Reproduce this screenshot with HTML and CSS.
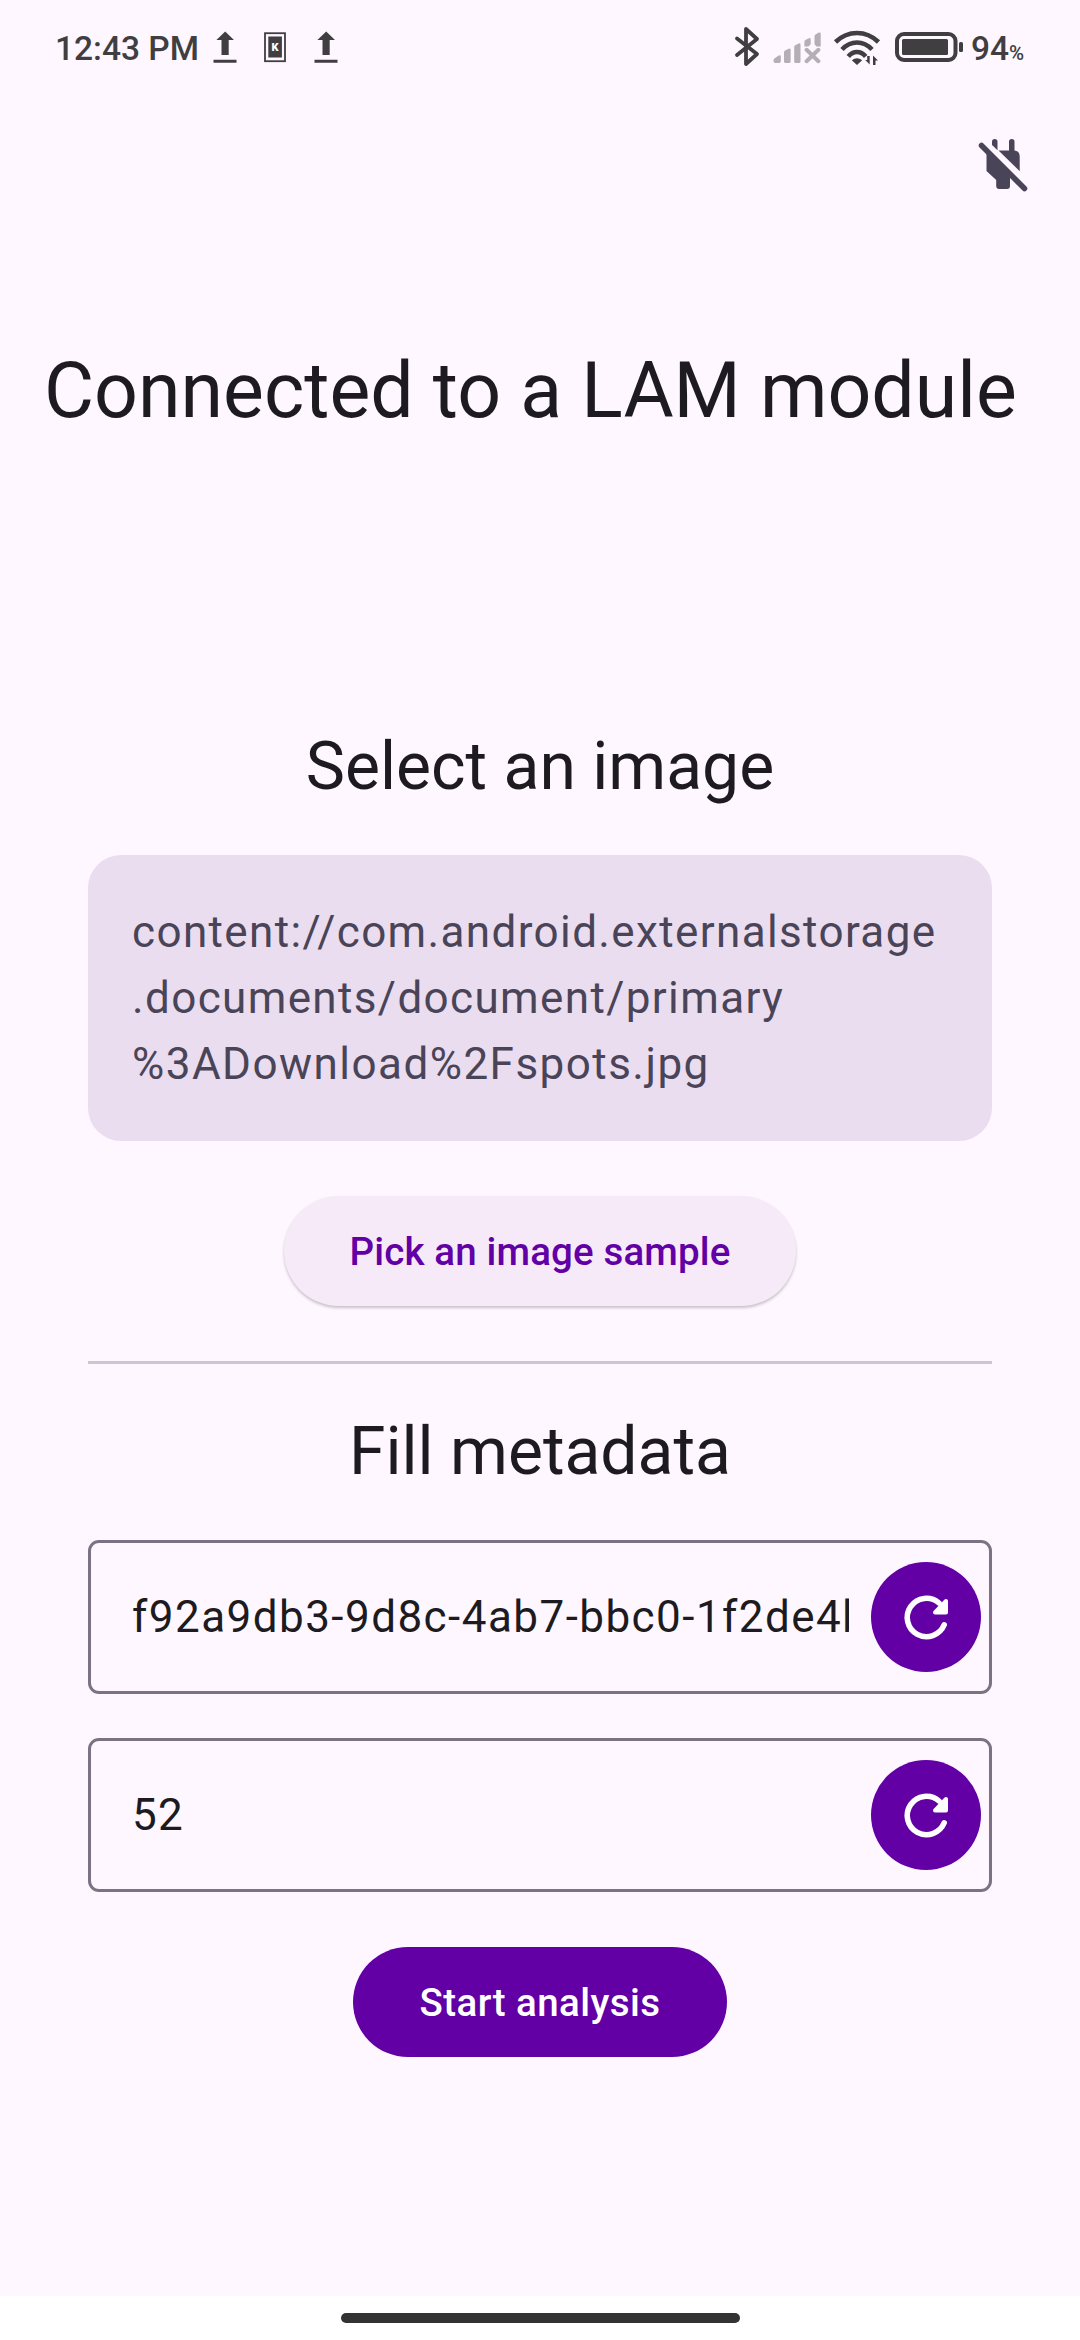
FILE: index.html
```html
<!DOCTYPE html>
<html lang="en">
<head>
<meta charset="utf-8">
<title>LAM module</title>
<link rel="stylesheet" href="styles.css">
</head>
<body>
<div class="screen">
  <header class="status-bar">
    <div class="status-left">
      <span class="clock">12:43 PM</span>
      <svg class="status-icon" width="24" height="40" viewBox="0 0 24 40"><path d="M12.2 4.5 21 13h-5.300v15H8.500V13H3.400zM.5 32.700h23v3H.5z" fill="#403e41"/></svg>
      <svg class="status-icon badge-icon" width="22" height="40" viewBox="0 0 22 40"><rect x="1" y="6.200" width="20" height="28" fill="none" stroke="#403e41" stroke-width="1.800"/><rect x="4.300" y="9.500" width="13.600" height="21" fill="#403e41"/><text x="7.400" y="24" class="badge-letter">K</text></svg>
      <svg class="status-icon" width="24" height="40" viewBox="0 0 24 40"><path d="M12.2 4.5 21 13h-5.300v15H8.500V13H3.400zM.5 32.700h23v3H.5z" fill="#403e41"/></svg>
    </div>
    <div class="status-right">
      <svg width="26" height="40" viewBox="734 27 26 40"><path d="M737 38.5 757 54 746 64V29l11 10-20 16" fill="none" stroke="#403e41" stroke-width="3.8" stroke-linecap="round" stroke-linejoin="round"/></svg>
      <svg class="signal" width="48" height="40" viewBox="773 27 48 40"><g fill="#b5aeb6"><path d="M773.5 60.2q0-1.2 1.2-2l4-2.6q2.1-.9 2.1 1.2v4.7q0 1.4-1.4 1.4h-4q-1.9 0-1.9-2zM784 52.2q0-1 1-1.7l3.7-1.8q1.9-.6 1.9 1.2v11.5q0 1.5-1.5 1.5h-3.6q-1.5 0-1.5-1.5zM794.2 47q0-1 1-1.7l3.5-1.8q1.8-.6 1.8 1.2v16.7q0 1.5-1.5 1.5h-3.3q-1.5 0-1.5-1.5zM804.4 41.7q0-1 1-1.7l3.5-1.8q1.8-.6 1.8 1.2v4.9l-2.3 2.2h-4zM814.5 36.2q0-1 1-1.7l3.3-1.9q1.9-.7 1.9 1.2v12.7h-4.2l-2-2.2z"/></g><path d="m806.6 49.8 11.8 11.4m0-11.4-11.8 11.4" stroke="#b5aeb6" stroke-width="4" stroke-linecap="round"/></svg>
      <svg class="wifi" width="48" height="40" viewBox="833 27 48 40"><g fill="none" stroke="#403e41" stroke-width="4.600"><path d="M835.5 42Q845 33 857 33t21.500 9"/><path d="M842 49.500Q848.500 42.500 857 42.500t15 7"/><path d="M848.300 56.500Q852 52 857 52t8.700 4.500"/></g><path d="M851.800 60.300Q857 56 862.200 60.300L857 65z" fill="#403e41"/><path d="M869.700 56v8.500l-4.500-4.500h2V56zM873 65v-9.500l5 5h-2.500V65z" fill="#403e41"/></svg>
      <svg class="battery" width="70" height="40" viewBox="894 27 70 40"><rect x="897" y="34" width="58.500" height="26" rx="7" fill="none" stroke="#403e41" stroke-width="4"/><rect x="902" y="39" width="46" height="16" rx="1.500" fill="#403e41"/><rect x="959" y="42" width="4" height="10" rx="1.500" fill="#403e41"/></svg>
      <span class="charge">94<small>%</small></span>
    </div>
  </header>
  <div class="toolbar">
    <svg width="66" height="66" viewBox="970 131 66 66" fill="#4a4458"><path d="m981.500 145.500 43 43" stroke="#4a4458" stroke-width="5.500" stroke-linecap="round"/><path d="M992 145v-3.200a2.750 2.750 0 0 1 5.500 0v8.500zM998.500 150.500h10.500v-8.700a2.750 2.750 0 0 1 5.500 0v8.700q5.200.8 5.200 6v14.700zM986.500 150.500v20.500l9.700 9v6q0 3 3 3h7.800q3 0 3-3v-11.700z"/></svg>
  </div>
  <h1 class="title">Connected to a LAM module</h1>
  <main class="content">
    <h2 class="heading">Select an image</h2>
    <p class="uri-card">content://com.android.externalstorage<br>.documents/document/primary<br><span class="uri-tail">%3ADownload%2Fspots.jpg</span></p>
    <button class="button button-elevated">Pick an image sample</button>
    <hr class="divider">
    <h2 class="heading">Fill metadata</h2>
    <div class="field">
      <span class="field-value field-value-id">f92a9db3-9d8c-4ab7-bbc0-1f2de4b</span>
      <button class="refresh" aria-label="Generate identifier"><svg width="110" height="110" viewBox="0 0 110 110"><path d="M73.200 62.800A19.200 19.200 0 1 1 68 41" fill="none" stroke="#fff" stroke-width="5.600" stroke-linecap="round"/><path d="M75 39v11.500H64z" fill="#fff" stroke="#fff" stroke-width="4" stroke-linejoin="round"/></svg></button>
    </div>
    <div class="field">
      <span class="field-value">52</span>
      <button class="refresh" aria-label="Generate number"><svg width="110" height="110" viewBox="0 0 110 110"><path d="M73.200 62.800A19.200 19.200 0 1 1 68 41" fill="none" stroke="#fff" stroke-width="5.600" stroke-linecap="round"/><path d="M75 39v11.500H64z" fill="#fff" stroke="#fff" stroke-width="4" stroke-linejoin="round"/></svg></button>
    </div>
    <button class="button button-filled">Start analysis</button>
  </main>
  <footer class="nav-bar"><div class="nav-handle"></div></footer>
</div>
</body>
</html>
```

FILE: styles.css
```css
* {
  box-sizing: border-box;
}

body {
  margin: 0;
  background: #fef7ff;
  color: #1d1b20;
  font-family: Roboto, sans-serif;
}

h1,
h2,
p {
  margin: 0;
  font-weight: 400;
}

svg {
  display: block;
  flex: none;
}

button {
  border: 0;
  padding: 0;
  font-family: inherit;
}

.screen {
  width: 1080px;
  height: 2340px;
  display: flex;
  flex-direction: column;
}

.status-bar {
  height: 94px;
  padding: 0 55px;
  display: flex;
  justify-content: space-between;
  align-items: center;
  color: #403e41;
  font-weight: 500;
}

.status-left,
.status-right {
  display: flex;
  align-items: center;
}

.clock {
  width: 146px;
  margin-right: 12px;
  padding-top: 2px;
  font-size: 33.5px;
  white-space: nowrap;
}

.badge-icon {
  margin: 0 28px 0 27px;
}

.badge-letter {
  fill: #fff;
  font-size: 11px;
  font-weight: 900;
}

.signal {
  margin-left: 13px;
}

.wifi {
  margin-left: 12px;
}

.battery {
  margin-left: 13px;
}

.charge {
  width: 54px;
  margin-left: 7px;
  padding-top: 2px;
  font-size: 33.5px;
  white-space: nowrap;
}

.charge small {
  font-size: 20.5px;
}

.toolbar {
  height: 140px;
  padding: 37px 44px 0;
  display: flex;
  justify-content: flex-end;
}

.title {
  margin-top: 108px;
  padding-left: 44px;
  font-size: 77px;
  line-height: 99px;
  white-space: nowrap;
}

.content {
  flex: 1;
  margin-top: 282px;
  padding: 0 88px;
  display: flex;
  flex-direction: column;
  align-items: center;
}

.heading {
  font-size: 66px;
  line-height: 88px;
}

.uri-card {
  width: 100%;
  margin-top: 44px;
  padding: 44px;
  border-radius: 33px;
  background: #eaddef;
  color: #4a4458;
  font-size: 44px;
  line-height: 66px;
  letter-spacing: 1.375px;
  white-space: nowrap;
}

.uri-tail {
  letter-spacing: 1.47px;
}

.button {
  height: 110px;
  padding: 0 66px;
  border-radius: 55px;
  font-size: 38.5px;
  font-weight: 500;
  white-space: nowrap;
}

.button-elevated {
  margin-top: 55px;
  background: #f6eaf8;
  color: #6200a6;
  letter-spacing: 0.14px;
  box-shadow: 0 2px 3px rgba(0, 0, 0, 0.22);
}

.divider {
  width: 100%;
  height: 3px;
  margin: 55px 0 44px;
  border: 0;
  background: #cfc3d4;
}

.field {
  width: 100%;
  height: 154px;
  margin-top: 44px;
  padding: 0 8px 0 41px;
  border: 3px solid #7c7284;
  border-radius: 11px;
  display: flex;
  align-items: center;
  gap: 22px;
}

.field-value {
  flex: 1;
  min-width: 0;
  overflow: hidden;
  font-size: 44px;
  line-height: 66px;
  letter-spacing: 1.375px;
  white-space: nowrap;
}

.field-value-id {
  letter-spacing: 1.46px;
}

.refresh {
  width: 110px;
  height: 110px;
  border-radius: 50%;
  background: #6200a6;
}

.button-filled {
  margin-top: 55px;
  background: #6200a6;
  color: #fff;
  letter-spacing: 0.44px;
}

.nav-bar {
  height: 44px;
  padding-top: 17px;
  background: #fff;
}

.nav-handle {
  width: 399px;
  height: 10px;
  margin: 0 auto;
  border-radius: 5px;
  background: #333;
}
```
